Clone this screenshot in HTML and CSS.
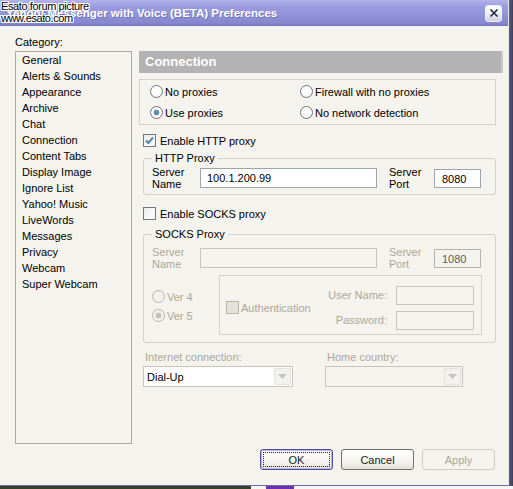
FILE: index.html
```html
<!DOCTYPE html>
<html>
<head>
<meta charset="utf-8">
<link rel="stylesheet" href="styles.css">
</head>
<body>
<div class="screen">
  <div class="window">
    <div class="titlebar">
      <span class="title">Yahoo! Messenger with Voice (BETA) Preferences</span>
      <span class="close"><svg width="10" height="10" viewBox="0 0 10 10"><path d="M1.5 1.5 L8.5 8.5 M8.5 1.5 L1.5 8.5" stroke="#1d2647" stroke-width="1.6" fill="none"/></svg></span>
    </div>
    <div class="client">
      <div class="main">
        <div class="left">
          <div class="cat-label">Category:</div>
          <ul class="cat-list">
            <li>General</li>
            <li>Alerts &amp; Sounds</li>
            <li>Appearance</li>
            <li>Archive</li>
            <li>Chat</li>
            <li>Connection</li>
            <li>Content Tabs</li>
            <li>Display Image</li>
            <li>Ignore List</li>
            <li>Yahoo! Music</li>
            <li>LiveWords</li>
            <li>Messages</li>
            <li>Privacy</li>
            <li>Webcam</li>
            <li>Super Webcam</li>
          </ul>
        </div>
        <div class="right">
          <div class="header">Connection</div>
          <div class="radio-box">
            <label class="opt"><span class="radio"></span>No proxies</label>
            <label class="opt"><span class="radio"></span>Firewall with no proxies</label>
            <label class="opt"><span class="radio on"></span>Use proxies</label>
            <label class="opt"><span class="radio"></span>No network detection</label>
          </div>
          <label class="opt check-row http-check"><span class="check"><svg width="11" height="11" viewBox="0 0 11 11"><path d="M2 5.5 L4.3 8 L9 2.5" stroke="#4f87b0" stroke-width="2" fill="none"/></svg></span>Enable HTTP proxy</label>
          <fieldset class="group http">
            <legend>HTTP Proxy</legend>
            <div class="server-row">
              <div class="lbl name-lbl">Server<br>Name</div>
              <div class="input name-in">100.1.200.99</div>
              <div class="lbl port-lbl">Server<br>Port</div>
              <div class="input port-in">8080</div>
            </div>
          </fieldset>
          <label class="opt check-row socks-check"><span class="check"></span>Enable SOCKS proxy</label>
          <fieldset class="group socks">
            <legend>SOCKS Proxy</legend>
            <div class="server-row dis">
              <div class="lbl name-lbl">Server<br>Name</div>
              <div class="input name-in"></div>
              <div class="lbl port-lbl">Server<br>Port</div>
              <div class="input port-in">1080</div>
            </div>
            <div class="ver-row">
              <div class="vers">
                <label class="opt dis"><span class="radio dis-r"></span>Ver 4</label>
                <label class="opt dis"><span class="radio dis-r on-dis"></span>Ver 5</label>
              </div>
              <div class="auth-box">
                <label class="opt dis auth"><span class="check dis-c"></span>Authentication</label>
                <div class="cred">
                  <span class="dis">User Name:</span><div class="input cred-in"></div>
                  <span class="dis">Password:</span><div class="input cred-in"></div>
                </div>
              </div>
            </div>
          </fieldset>
          <div class="combos">
            <div class="combo-col">
              <div class="dis combo-lbl">Internet connection:</div>
              <div class="combo wide"><span class="combo-val">Dial-Up</span><span class="drop"><svg width="9" height="5" viewBox="0 0 9 5"><path d="M0 0 H9 L4.5 5 Z" fill="#c3c3c3"/></svg></span></div>
            </div>
            <div class="combo-col">
              <div class="dis combo-lbl">Home country:</div>
              <div class="combo narrow"><span class="combo-val"></span><span class="drop"><svg width="9" height="5" viewBox="0 0 9 5"><path d="M0 0 H9 L4.5 5 Z" fill="#c3c3c3"/></svg></span></div>
            </div>
          </div>
        </div>
      </div>
      <div class="buttons">
        <div class="btn ok"><span>OK</span></div>
        <div class="btn">Cancel</div>
        <div class="btn disabled">Apply</div>
      </div>
    </div>
  </div>
  <div class="edge-right"></div>
  <div class="desktop">
    <div class="grass"></div>
    <div class="paper"><span class="blob"></span></div>
  </div>
  <div class="watermark">Esato forum picture<br>www.esato.com</div>
</div>
</body>
</html>
```
FILE: styles.css
```css
* { box-sizing: border-box; }
html, body { margin: 0; padding: 0; }
body {
  width: 513px;
  height: 489px;
  overflow: hidden;
  font-family: "Liberation Sans", Arial, sans-serif;
  font-size: 11px;
  color: #000;
  background: #2f3b28;
}
.screen {
  position: relative;
  display: grid;
  grid-template-columns: 509px 4px;
  grid-template-rows: 486px 3px;
  width: 513px;
  height: 489px;
}
.window {
  grid-column: 1;
  grid-row: 1;
  display: flex;
  flex-direction: column;
  background: #f4f3ee;
  border-bottom: 1px solid #6d6d9c;
  border-right: 1px solid #e6e5de;
}
.edge-right {
  grid-column: 2;
  grid-row: 1;
  background: linear-gradient(90deg, #5d5d86, #3e3e58);
}
.desktop {
  grid-column: 1 / 3;
  grid-row: 2;
  display: flex;
}
.grass { width: 251px; background: #33412a; }
.paper { flex: 1; background: #f6f6f6; display: flex; padding-left: 15px; }
.blob { width: 28px; height: 3px; background: #6b2fb3; }

.titlebar {
  height: 26px;
  flex: none;
  display: flex;
  align-items: center;
  padding: 0 6px 1px 6px;
  background: linear-gradient(180deg, #b3b4ec 0%, #9b9cdf 25%, #9091d8 60%, #8586cd 90%, #7677bd 100%);
}
.title {
  flex: 1;
  color: #fff;
  font-weight: bold;
  font-size: 11.5px;
  text-shadow: 1px 1px 0 rgba(60, 60, 120, 0.35);
}
.close {
  width: 17px;
  height: 17px;
  display: flex;
  align-items: center;
  justify-content: center;
  border: 1px solid #f2f2fb;
  border-radius: 3px;
  background: linear-gradient(180deg, #ffffff 0%, #e7e7f1 60%, #cfd0e2 100%);
  margin-top: 1px;
}

.client {
  flex: 1;
  display: flex;
  flex-direction: column;
}
.main {
  display: flex;
  padding: 9px 0 0 15px;
}
.left { width: 117px; }
.cat-label { height: 16px; line-height: 14px; }
.cat-list {
  list-style: none;
  margin: 0;
  padding: 0 0 0 6px;
  height: 393px;
  border: 1px solid #a9a8a4;
  line-height: 16px;
}
.right {
  width: 364px;
  margin-left: 7px;
  margin-top: 16px;
  display: flex;
  flex-direction: column;
}
.header {
  height: 22px;
  line-height: 22px;
  background: #b3b3b3;
  color: #fff;
  font-weight: bold;
  font-size: 13px;
  padding-left: 6px;
  border-right: 2px solid #c9c9c4;
}
.radio-box {
  margin-top: 6px;
  width: 357px;
  height: 46px;
  border: 1px solid #d3d2c8;
  padding: 1px 0 0 10px;
  display: grid;
  grid-template-columns: 150px 1fr;
  grid-auto-rows: 21px;
}
.opt {
  display: flex;
  align-items: center;
  gap: 2px;
  white-space: nowrap;
}
.radio {
  width: 13px;
  height: 13px;
  border-radius: 50%;
  border: 1px solid #6f7780;
  background: radial-gradient(circle at 45% 40%, #ffffff 0 40%, #e6e6e2 100%);
  flex: none;
}
.radio.on {
  background: radial-gradient(circle, #5b8fb2 0 2.6px, #ffffff 3.2px, #ececea 100%);
}
.radio.dis-r {
  border-color: #b8b6ab;
  background: #f1f0ea;
}
.radio.on-dis {
  background: radial-gradient(circle, #c4c2b8 0 2.6px, #f1f0ea 3.2px);
}
.check {
  width: 13px;
  height: 13px;
  border: 1px solid #6f7780;
  background: linear-gradient(135deg, #ececea, #ffffff);
  display: flex;
  align-items: center;
  justify-content: center;
  flex: none;
}
.check.dis-c {
  border-color: #b8b6ab;
  background: #e4e2da;
}
.check-row { height: 13px; margin-left: 4px; gap: 4px; }
.http-check { margin-top: 9px; }
.socks-check { margin-top: 12px; }

.group {
  margin: 0 0 0 4px;
  width: 353px;
  border: 1px solid #d3d2c8;
  border-radius: 3px;
  padding: 0 8px 0 8px;
}
.group legend {
  padding: 0 3px;
  line-height: 13px;
  height: 13px;
}
.http { margin-top: 5px; padding-top: 1px; padding-bottom: 4px; }
.socks { margin-top: 8px; padding-top: 5px; padding-bottom: 7px; }

.server-row {
  display: flex;
  align-items: center;
  height: 24px;
}
.lbl { line-height: 12px; }
.name-lbl { width: 48px; }
.port-lbl { width: 45px; margin-left: 12px; }
.input {
  height: 20px;
  border: 1px solid #9aa6b1;
  background: #fff;
  padding: 0 0 0 5px;
  line-height: 18px;
}
.name-in { width: 177px; padding-left: 6px; }
.port-in { width: 47px; height: 19px; padding-left: 7px; }
.dis { color: #aca899; }
.server-row.dis .input { background: transparent; border-color: #c6c4bb; color: #5c5c5c; }
.server-row.dis .port-in { border-color: #b5b3ab; }

.ver-row {
  display: flex;
  margin-top: 5px;
}
.vers {
  width: 67px;
  display: flex;
  flex-direction: column;
  padding-top: 15px;
  gap: 6px;
}
.vers .opt { height: 13px; }
.auth-box {
  width: 263px;
  height: 60px;
  border: 1px solid #d3d2c8;
  display: flex;
  align-items: center;
  padding: 5px 7px 0 6px;
}
.auth { gap: 2px; }
.cred {
  margin-left: auto;
  display: grid;
  grid-template-columns: auto 78px;
  column-gap: 9px;
  row-gap: 6px;
  align-items: center;
  justify-items: end;
}
.cred-in {
  width: 78px;
  height: 19px;
  border-color: #c6c4bb;
  background: transparent;
}

.combos {
  display: flex;
  gap: 32px;
  margin: 8px 0 0 4px;
}
.combo-lbl { line-height: 12px; height: 15px; margin-left: 2px; }
.combo {
  height: 21px;
  border: 1px solid #c6c4bb;
  background: #fff;
  display: flex;
  align-items: center;
  padding: 1px;
}
.combo.wide { width: 150px; }
.combo.narrow { width: 138px; background: #f4f3ee; }
.combo-val { flex: 1; padding-left: 2px; }
.drop {
  width: 17px;
  height: 17px;
  border: 1px solid #e3e2dc;
  border-radius: 2px;
  background: #f3f2ee;
  display: flex;
  align-items: center;
  justify-content: center;
}

.buttons {
  margin-top: auto;
  display: flex;
  justify-content: flex-end;
  gap: 8px;
  padding: 0 13px 15px 0;
}
.btn {
  width: 73px;
  height: 21px;
  border: 1px solid #707070;
  border-radius: 3px;
  background: linear-gradient(180deg, #ffffff 0%, #f4f3ef 60%, #e4e2da 100%);
  display: flex;
  align-items: center;
  justify-content: center;
  color: #222;
}
.btn.ok {
  border-color: #4f4fa0;
  box-shadow: inset 0 0 0 1px #b7b7e6;
  padding: 2px;
}
.btn.ok span {
  flex: 1;
  align-self: stretch;
  display: flex;
  align-items: center;
  justify-content: center;
  border: 1px dotted #222;
}
.btn.disabled {
  border-color: #cfcdc4;
  background: #f4f3ee;
  color: #aca899;
}

.watermark {
  position: absolute;
  left: 1px;
  top: 0;
  font-size: 11px;
  line-height: 12px;
  letter-spacing: -0.4px;
  color: #000;
  text-shadow: 1px 0 0 #fff, -1px 0 0 #fff, 0 1px 0 #fff, 0 -1px 0 #fff, 1px 1px 0 #fff, -1px -1px 0 #fff, 1px -1px 0 #fff, -1px 1px 0 #fff;
}
```
